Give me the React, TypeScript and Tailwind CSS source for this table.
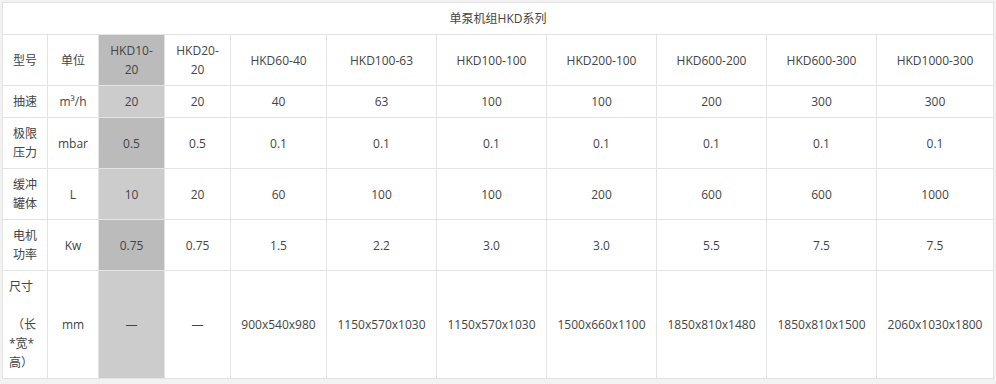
const widths = [45, 51, 66, 66, 96, 110, 110, 110, 110, 110, 117]

const models = [
  'HKD10-20',
  'HKD20-20',
  'HKD60-40',
  'HKD100-63',
  'HKD100-100',
  'HKD200-100',
  'HKD600-200',
  'HKD600-300',
  'HKD1000-300',
]

const rows: { label: string[]; unit: string; cells: string[] }[] = [
  {
    label: ['抽速'],
    unit: 'm³/h',
    cells: ['20', '20', '40', '63', '100', '100', '200', '300', '300'],
  },
  {
    label: ['极限', '压力'],
    unit: 'mbar',
    cells: ['0.5', '0.5', '0.1', '0.1', '0.1', '0.1', '0.1', '0.1', '0.1'],
  },
  {
    label: ['缓冲', '罐体'],
    unit: 'L',
    cells: ['10', '20', '60', '100', '100', '200', '600', '600', '1000'],
  },
  {
    label: ['电机', '功率'],
    unit: 'Kw',
    cells: ['0.75', '0.75', '1.5', '2.2', '3.0', '3.0', '5.5', '7.5', '7.5'],
  },
]

const sizes = [
  '—',
  '—',
  '900x540x980',
  '1150x570x1030',
  '1150x570x1030',
  '1500x660x1100',
  '1850x810x1480',
  '1850x810x1500',
  '2060x1030x1800',
]

const td = 'border border-[#e3e3e3] px-[6px] py-[6px] text-center align-middle'

export default function App() {
  return (
    <div
      className="min-h-screen bg-[#f2f2f2] pt-[2px] pl-[2px]"
      style={{ fontFamily: '"Open Sans", "Noto Sans CJK SC", sans-serif' }}
    >
      <table className="table-fixed border-collapse bg-white text-[12px] leading-[19px] text-[#444] w-[991px]">
        <colgroup>
          {widths.map((w, i) => (
            <col key={i} style={{ width: w }} />
          ))}
        </colgroup>
        <tbody>
          <tr>
            <td colSpan={11} className={td}>
              单泵机组HKD系列
            </td>
          </tr>
          <tr>
            <td className={td}>型号</td>
            <td className={td}>单位</td>
            {models.map((m, i) => (
              <td key={m} className={`${td} ${i === 0 ? 'bg-[#bbbbbb]' : ''}`}>
                {m}
              </td>
            ))}
          </tr>
          {rows.map((r, ri) => (
            <tr key={r.unit}>
              <td className={td}>
                {r.label.map((l, li) => (
                  <div key={li}>{l}</div>
                ))}
              </td>
              <td className={td}>{r.unit}</td>
              {r.cells.map((c, i) => (
                <td
                  key={i}
                  className={`${td} ${i === 0 ? (ri % 2 === 0 ? 'bg-[#cccccc]' : 'bg-[#bbbbbb]') : ''}`}
                >
                  {c}
                </td>
              ))}
            </tr>
          ))}
          <tr>
            <td className={`${td} text-left`}>
              尺寸
              <br />
              <br />
              &nbsp;（长
              <br />
              *宽*
              <br />
              高）
            </td>
            <td className={td}>mm</td>
            {sizes.map((s, i) => (
              <td key={i} className={`${td} ${i === 0 ? 'bg-[#cccccc]' : ''}`}>
                {s}
              </td>
            ))}
          </tr>
        </tbody>
      </table>
    </div>
  )
}
